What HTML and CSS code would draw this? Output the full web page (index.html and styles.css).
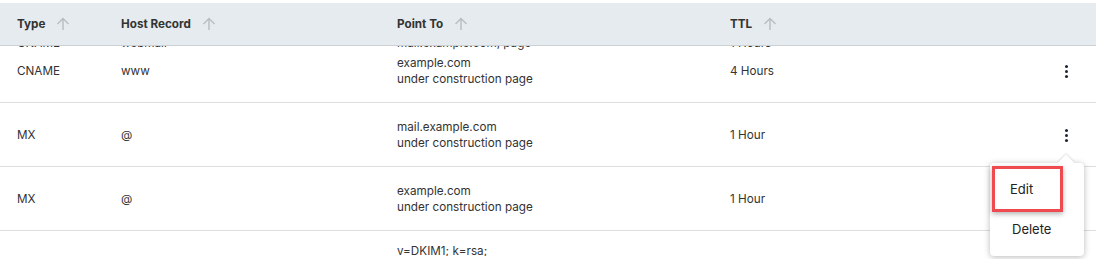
FILE: index.html
```html
<!DOCTYPE html>
<html lang="en">
<head>
    <meta charset="UTF-8">
    <meta name="viewport" content="width=device-width, initial-scale=1.0">
    <title>DNS Records</title>
    <link rel="stylesheet" href="styles.css">
</head>
<body>
    <div class="records">
        <div class="head">
            <div class="th">Type <svg class="sort" viewBox="0 0 14 14"><path d="M7 13V1.5M1.5 7L7 1.5 12.5 7"/></svg></div>
            <div class="th">Host Record <svg class="sort" viewBox="0 0 14 14"><path d="M7 13V1.5M1.5 7L7 1.5 12.5 7"/></svg></div>
            <div class="th">Point To <svg class="sort" viewBox="0 0 14 14"><path d="M7 13V1.5M1.5 7L7 1.5 12.5 7"/></svg></div>
            <div class="th">TTL <svg class="sort" viewBox="0 0 14 14"><path d="M7 13V1.5M1.5 7L7 1.5 12.5 7"/></svg></div>
            <div class="th"></div>
        </div>
        <div class="rows">
            <div class="row peek">
                <div>CNAME</div>
                <div>webmail</div>
                <div>mail.example.com, page</div>
                <div>1 Hours</div>
                <div></div>
            </div>
            <div class="row">
                <div>CNAME</div>
                <div>www</div>
                <div>example.com<br>under construction page</div>
                <div>4 Hours</div>
                <div class="more"><span class="kebab"></span></div>
            </div>
            <div class="row">
                <div>MX</div>
                <div>@</div>
                <div>mail.example.com<br>under construction page</div>
                <div>1 Hour</div>
                <div class="more"><span class="kebab"></span></div>
            </div>
            <div class="row">
                <div>MX</div>
                <div>@</div>
                <div>example.com<br>under construction page</div>
                <div>1 Hour</div>
                <div class="more"></div>
            </div>
            <div class="row last">
                <div>TXT</div>
                <div>default._domainkey</div>
                <div>v=DKIM1; k=rsa;<br>p=MIGfMA0GCSqGSIb3DQEBAQUAA<br>under construction page</div>
                <div>1 Hour</div>
                <div class="more"><span class="kebab"></span></div>
            </div>
        </div>
        <div class="menu">
            <div class="menu-item selected">Edit</div>
            <div class="menu-item">Delete</div>
        </div>
    </div>
</body>
</html>
```

FILE: styles.css
```css
body {
    margin: 0;
    font-family: Inter, "Noto Sans", sans-serif;
    font-size: 11.7px;
    color: #333;
    background: #fff;
    overflow: hidden;
}
.records {
    position: relative;
    padding-top: 3px;
    height: 256px;
    overflow: hidden;
}
.head,
.row {
    display: grid;
    grid-template-columns: 104px 276px 333px 1fr 48px;
    padding-left: 17px;
    padding-right: 6px;
}
.head {
    position: relative;
    z-index: 2;
    height: 42px;
    align-items: center;
    background: #e5ebee;
    border-bottom: 1px solid #ccd1d5;
    font-weight: 700;
}
.th {
    display: flex;
    align-items: center;
    gap: 11px;
}
.sort {
    width: 14px;
    height: 14px;
    fill: none;
    stroke: #b9bdc1;
    stroke-width: 1.4;
}
.rows {
    height: 210px;
    overflow: hidden;
}
.row {
    box-sizing: border-box;
    min-height: 64px;
    align-items: center;
    line-height: 16px;
    border-bottom: 1px solid #dedede;
}
.row.peek {
    min-height: 14px;
    height: 14px;
    line-height: 14px;
    margin-top: -10.5px;
    margin-bottom: -10.5px;
    border-bottom: none;
}
.row:not(.peek) {
    padding-top: 14px;
    padding-bottom: 14px;
}
.row.last {
    padding-top: 12px;
}
.more {
    display: flex;
    justify-content: center;
}
.kebab {
    width: 3px;
    height: 3px;
    border-radius: 50%;
    background: #1d2433;
    box-shadow: 0 -5px 0 #1d2433, 0 5px 0 #1d2433;
    margin-top: 1px;
}
.menu {
    position: absolute;
    z-index: 3;
    left: 990px;
    top: 163px;
    width: 94px;
    box-sizing: border-box;
    padding: 3px 2px 10px;
    background: #fff;
    border-radius: 4px;
    box-shadow: 0 1px 6px rgba(0, 0, 0, 0.28);
    font-size: 13px;
    color: #222;
}
.menu::before {
    content: "";
    position: absolute;
    left: 70px;
    top: -6px;
    width: 12px;
    height: 12px;
    background: #fff;
    transform: rotate(45deg);
    box-shadow: -1px -1px 2px rgba(0, 0, 0, 0.1);
}
.menu-item {
    position: relative;
    height: 34px;
    line-height: 34px;
    padding-left: 20px;
}
.menu-item.selected {
    width: 71px;
    height: 46px;
    line-height: 41px;
    box-sizing: border-box;
    padding-left: 15px;
    border: 3px solid #ef4a4f;
    box-shadow: 0 2px 5px rgba(0, 0, 0, 0.3);
    background: #fff;
}
```
